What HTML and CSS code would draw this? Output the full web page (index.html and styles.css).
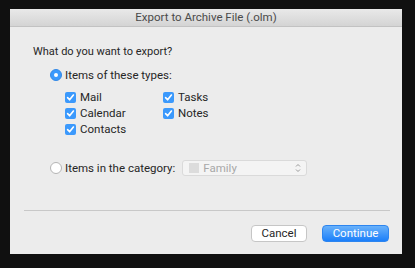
FILE: index.html
```html
<!DOCTYPE html>
<html lang="en">
<head>
    <meta charset="UTF-8">
    <meta name="viewport" content="width=device-width, initial-scale=1.0">
    <title>Export to Archive File</title>
    <link rel="stylesheet" href="styles.css">
</head>
<body>
    <div class="dialog">
        <div class="titlebar">Export to Archive File (.olm)</div>
        <div class="content">
            <div class="question">What do you want to export?</div>

            <div class="radio-row">
                <span class="radio on"></span>
                <span>Items of these types:</span>
            </div>
            <div class="types">
                <div class="col">
                    <label class="check"><span class="box"><svg viewBox="0 0 11 11"><path d="M2.6 5.6 L4.6 7.8 L8.4 3"/></svg></span>Mail</label>
                    <label class="check"><span class="box"><svg viewBox="0 0 11 11"><path d="M2.6 5.6 L4.6 7.8 L8.4 3"/></svg></span>Calendar</label>
                    <label class="check"><span class="box"><svg viewBox="0 0 11 11"><path d="M2.6 5.6 L4.6 7.8 L8.4 3"/></svg></span>Contacts</label>
                </div>
                <div class="col">
                    <label class="check"><span class="box"><svg viewBox="0 0 11 11"><path d="M2.6 5.6 L4.6 7.8 L8.4 3"/></svg></span>Tasks</label>
                    <label class="check"><span class="box"><svg viewBox="0 0 11 11"><path d="M2.6 5.6 L4.6 7.8 L8.4 3"/></svg></span>Notes</label>
                </div>
            </div>

            <div class="radio-row category">
                <span class="radio"></span>
                <span>Items in the category:</span>
                <div class="popup">
                    <span class="swatch"></span>
                    <span class="popup-label">Family</span>
                    <svg class="updown" viewBox="0 0 6 10"><path d="M1 3.5 L3 1.5 L5 3.5 M1 6.5 L3 8.5 L5 6.5"/></svg>
                </div>
            </div>
        </div>
        <div class="separator"></div>
        <div class="buttons">
            <button class="btn">Cancel</button>
            <button class="btn primary">Continue</button>
        </div>
    </div>
</body>
</html>
```

FILE: styles.css
```css
body {margin:0; background:#101010; font-family:"Roboto", "Noto Sans", sans-serif; font-size:11.5px; color:#262626;}
.dialog {margin:9px 0 0 10px; width:392px; height:245px; background:#ececec; display:flex; flex-direction:column;}
.titlebar {height:17px; line-height:17px; text-align:center; color:#4a4a4a; font-size:11.5px; background:linear-gradient(#e9e9e9, #d4d4d4); border-bottom:1px solid #c2c2c2;}
.content {padding:17px 0 0 23px; flex:1;}
.question {line-height:16px; font-size:11px;}
.radio-row {display:flex; align-items:center; gap:3px; margin:7px 0 0 17px; line-height:16px;}
.radio {width:12px; height:12px; border-radius:50%; box-sizing:border-box; background:#fff; border:1px solid #b5b5b5; position:relative;}
.radio.on {background:#3b99fc; border-color:#3489e6;}
.radio.on::after {content:""; position:absolute; left:3px; top:3px; width:4px; height:4px; border-radius:50%; background:#fff;}
.types {display:flex; margin:6px 0 0 32px;}
.col {width:98px; display:flex; flex-direction:column;}
.check {display:flex; align-items:center; gap:4px; height:16px; line-height:16px;}
.box {width:11px; height:11px; border-radius:2px; background:#3b99fc; display:flex;}
.box svg {width:11px; height:11px;}
.box path {fill:none; stroke:#fff; stroke-width:1.6; stroke-linecap:round; stroke-linejoin:round;}
.category {margin-top:23px;}
.popup {margin-left:4px; width:125px; height:16px; box-sizing:border-box; background:#f4f4f4; border:1px solid #dadada; border-radius:3px; display:flex; align-items:center; padding:0 5px 0 6px;}
.swatch {width:10px; height:10px; background:#dcdcdc; margin-right:4px;}
.popup-label {color:#a8a8a8; flex:1;}
.updown {width:6px; height:10px;}
.updown path {fill:none; stroke:#9a9a9a; stroke-width:1;}
.separator {height:1px; background:#c8c8c8; margin:0 12px 0 14px;}
.buttons {display:flex; justify-content:flex-end; gap:15px; padding:14px 13px 12px 0;}
.btn {font-family:inherit; font-size:11.5px; height:17px; padding:0; border:1px solid #c6c6c6; border-radius:4px; background:#fff; color:#262626; width:56px; line-height:15px;}
.btn.primary {width:67px; color:#fff; border-color:#2d85ef; background:linear-gradient(#69b1fa, #1b7ffa);}
```
